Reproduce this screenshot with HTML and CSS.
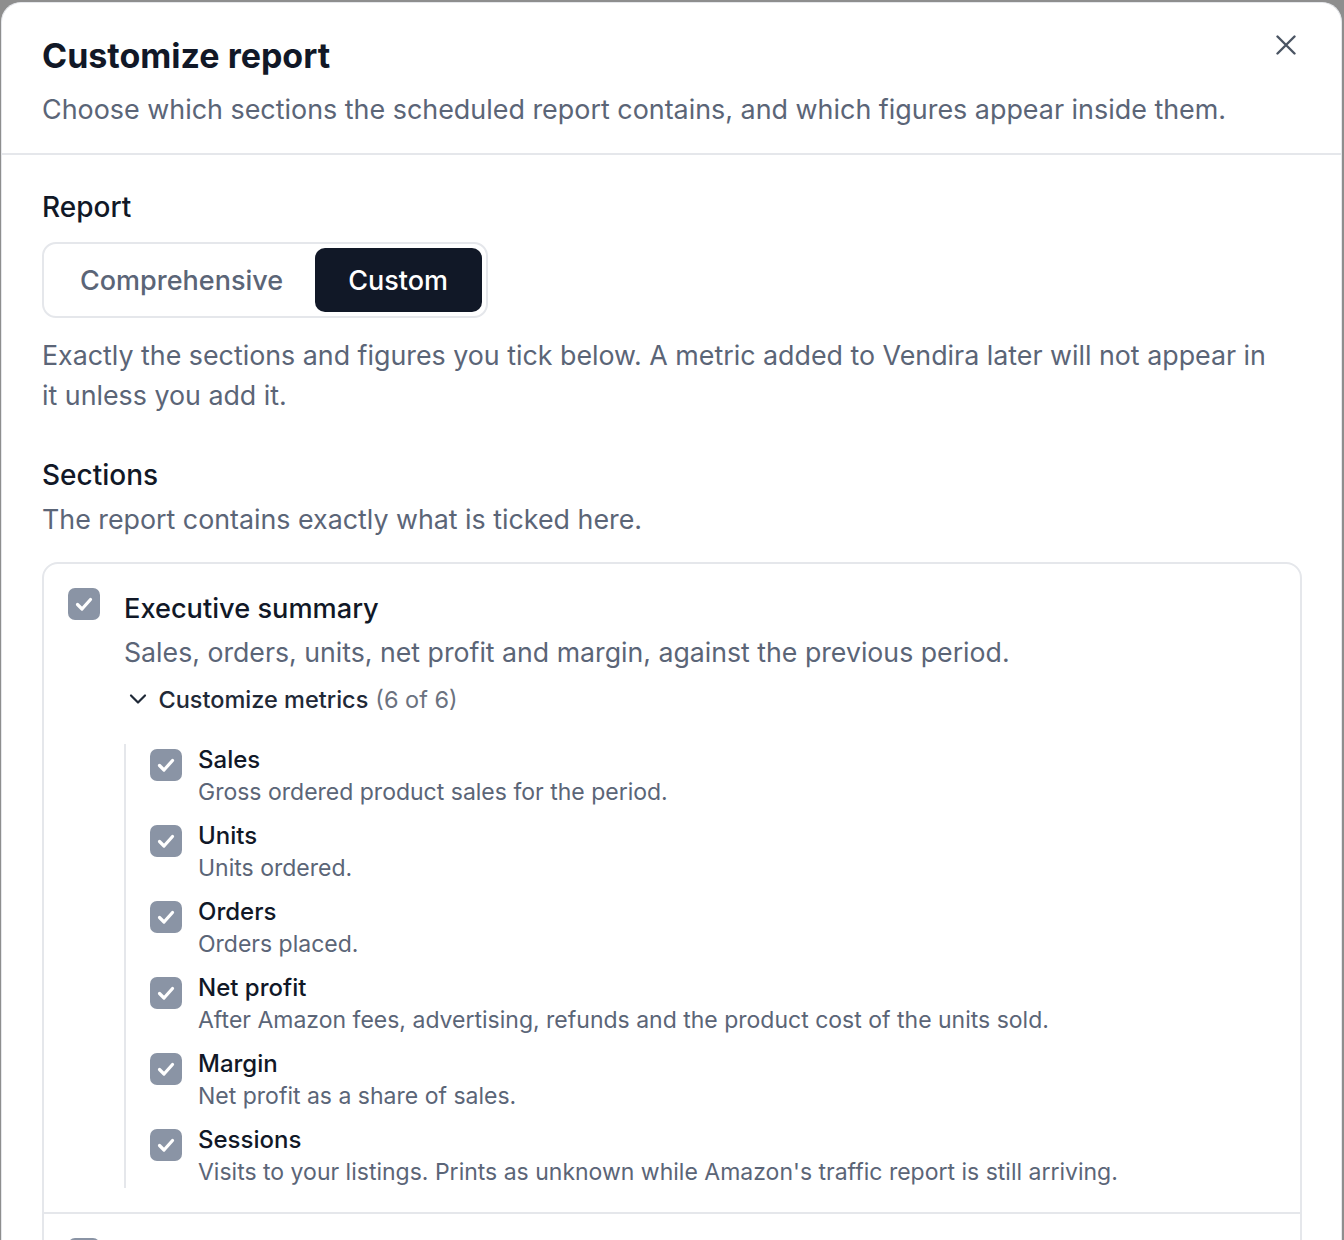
FILE: index.html
```html
<!DOCTYPE html>
<html lang="en">
<head>
<meta charset="utf-8">
<title>Customize report</title>
<link rel="stylesheet" href="styles.css">
</head>
<body>
<div class="dialog" role="dialog" aria-labelledby="dlg-title">
  <header class="dialog-head">
    <div class="head-text">
      <h1 id="dlg-title" class="title">Customize report</h1>
      <p class="subtitle">Choose which sections the scheduled report contains, and which figures appear inside them.</p>
    </div>
    <button class="close" aria-label="Close">
      <svg width="20" height="20" viewBox="0 0 20 20" fill="none" stroke="currentColor" stroke-width="2.4" stroke-linecap="round">
        <path d="M1.5 1.5 L18.5 18.5 M18.5 1.5 L1.5 18.5"/>
      </svg>
    </button>
  </header>

  <div class="dialog-body">
    <h2 class="label">Report</h2>
    <div class="segmented">
      <button class="seg">Comprehensive</button>
      <button class="seg seg-active">Custom</button>
    </div>
    <p class="help">Exactly the sections and figures you tick below. A metric added to Vendira later will not appear in it unless you add it.</p>

    <h2 class="label label-sections">Sections</h2>
    <p class="help help-tight">The report contains exactly what is ticked here.</p>

    <div class="sections">
      <div class="section">
        <span class="check">
          <svg viewBox="0 0 32 32" width="32" height="32"><path d="M9.5 16.5 L14 21 L22.5 11.5" fill="none" stroke="#fff" stroke-width="3.2" stroke-linecap="round" stroke-linejoin="round"/></svg>
        </span>
        <div class="section-main">
          <div class="section-title">Executive summary</div>
          <div class="section-desc">Sales, orders, units, net profit and margin, against the previous period.</div>
          <div class="toggle">
            <svg class="chev" width="18" height="18" viewBox="0 0 18 18" fill="none" stroke="currentColor" stroke-width="2.2" stroke-linecap="round" stroke-linejoin="round"><path d="M2 5.5 L9 12.5 L16 5.5"/></svg>
            <span class="toggle-text">Customize metrics</span>
            <span class="toggle-count">(6 of 6)</span>
          </div>
          <ul class="metrics">
            <li class="metric">
              <span class="check"><svg viewBox="0 0 32 32" width="32" height="32"><path d="M9.5 16.5 L14 21 L22.5 11.5" fill="none" stroke="#fff" stroke-width="3.2" stroke-linecap="round" stroke-linejoin="round"/></svg></span>
              <div><div class="metric-title">Sales</div><div class="metric-desc">Gross ordered product sales for the period.</div></div>
            </li>
            <li class="metric">
              <span class="check"><svg viewBox="0 0 32 32" width="32" height="32"><path d="M9.5 16.5 L14 21 L22.5 11.5" fill="none" stroke="#fff" stroke-width="3.2" stroke-linecap="round" stroke-linejoin="round"/></svg></span>
              <div><div class="metric-title">Units</div><div class="metric-desc">Units ordered.</div></div>
            </li>
            <li class="metric">
              <span class="check"><svg viewBox="0 0 32 32" width="32" height="32"><path d="M9.5 16.5 L14 21 L22.5 11.5" fill="none" stroke="#fff" stroke-width="3.2" stroke-linecap="round" stroke-linejoin="round"/></svg></span>
              <div><div class="metric-title">Orders</div><div class="metric-desc">Orders placed.</div></div>
            </li>
            <li class="metric">
              <span class="check"><svg viewBox="0 0 32 32" width="32" height="32"><path d="M9.5 16.5 L14 21 L22.5 11.5" fill="none" stroke="#fff" stroke-width="3.2" stroke-linecap="round" stroke-linejoin="round"/></svg></span>
              <div><div class="metric-title">Net profit</div><div class="metric-desc">After Amazon fees, advertising, refunds and the product cost of the units sold.</div></div>
            </li>
            <li class="metric">
              <span class="check"><svg viewBox="0 0 32 32" width="32" height="32"><path d="M9.5 16.5 L14 21 L22.5 11.5" fill="none" stroke="#fff" stroke-width="3.2" stroke-linecap="round" stroke-linejoin="round"/></svg></span>
              <div><div class="metric-title">Margin</div><div class="metric-desc">Net profit as a share of sales.</div></div>
            </li>
            <li class="metric">
              <span class="check"><svg viewBox="0 0 32 32" width="32" height="32"><path d="M9.5 16.5 L14 21 L22.5 11.5" fill="none" stroke="#fff" stroke-width="3.2" stroke-linecap="round" stroke-linejoin="round"/></svg></span>
              <div><div class="metric-title">Sessions</div><div class="metric-desc">Visits to your listings. Prints as unknown while Amazon's traffic report is still arriving.</div></div>
            </li>
          </ul>
        </div>
      </div>
      <div class="section">
        <span class="check">
          <svg viewBox="0 0 32 32" width="32" height="32"><path d="M9.5 16.5 L14 21 L22.5 11.5" fill="none" stroke="#fff" stroke-width="3.2" stroke-linecap="round" stroke-linejoin="round"/></svg>
        </span>
      </div>
    </div>
  </div>
</div>
</body>
</html>
```

FILE: styles.css
```css
* { box-sizing: border-box; }

html, body {
  margin: 0;
  height: 100%;
  overflow: hidden;
}

body {
  background: #8e8e8e;
  padding: 2px 2px 0 1px;
  font-family: Inter, "Noto Sans", "Liberation Sans", sans-serif;
  color: #111827;
}

.dialog {
  background: #fff;
  border: 1px solid #e5e7eb;
  border-bottom: 0;
  border-radius: 20px 20px 0 0;
  height: 1300px;
  overflow: hidden;
}

/* header */
.dialog-head {
  display: flex;
  justify-content: space-between;
  align-items: flex-start;
  padding: 33px 40px 24px 40px;
  border-bottom: 2px solid #e5e7eb;
}

.title {
  margin: 0;
  font-size: 34px;
  line-height: 40px;
  font-weight: 700;
  color: #111827;
}

.subtitle {
  margin: 13px 0 0;
  font-size: 26.9px;
  line-height: 40px;
  color: #5b6577;
}

.close {
  border: 0;
  background: none;
  padding: 0;
  margin: -1px 5px 0 0;
  color: #4b5563;
  display: flex;
}

/* body */
.dialog-body {
  padding: 34px 40px 0 40px;
}

.label {
  margin: 0;
  font-size: 28px;
  line-height: 36px;
  font-weight: 500;
  color: #111827;
}

.label-sections {
  margin-top: 42px;
}

.segmented {
  display: inline-flex;
  gap: 0;
  margin-top: 17px;
  padding: 4px;
  border: 2px solid #e5e7eb;
  border-radius: 14px;
}

.seg {
  border: 0;
  background: none;
  font-family: inherit;
  font-size: 27px;
  font-weight: 500;
  color: #5b6577;
  height: 64px;
  padding: 0 32px;
  border-radius: 10px;
}

.seg-active {
  background: #111827;
  color: #fff;
  padding: 0 34px 0 33px;
}

.help {
  margin: 17px 0 0;
  max-width: 1240px;
  font-size: 26.8px;
  line-height: 40px;
  color: #5b6577;
}

.help-tight {
  margin-top: 6px;
}

/* section list */
.sections {
  margin-top: 23px;
  border: 2px solid #e5e7eb;
  border-radius: 16px;
  width: 1260px;
}

.section {
  display: flex;
  gap: 24px;
  padding: 24px 24px;
}

.section + .section {
  border-top: 2px solid #e5e7eb;
}

.check {
  flex: none;
  width: 32px;
  height: 32px;
  border-radius: 7px;
  background: #8a94a5;
  display: flex;
}

.section-main {
  flex: 1;
}

.section-title {
  margin-top: 2px;
  font-size: 27.2px;
  line-height: 38px;
  font-weight: 500;
  color: #111827;
}

.section-desc {
  margin-top: 4px;
  font-size: 26.7px;
  line-height: 40px;
  color: #5b6577;
}

.toggle {
  display: flex;
  align-items: center;
  margin-top: 11px;
  height: 32px;
  font-size: 23.5px;
  color: #1f2937;
}

.chev {
  margin: 0 12px 0 4.5px;
  color: #1f2937;
}

.toggle-text {
  font-weight: 500;
}

.toggle-count {
  margin-left: 7px;
  color: #6b7280;
}

.metrics {
  list-style: none;
  margin: 29px 0 0;
  padding: 0 0 0 24px;
  border-left: 2px solid #e5e7eb;
  display: flex;
  flex-direction: column;
  gap: 12px;
}

.metric {
  display: flex;
  gap: 16px;
}

.metric .check {
  margin-top: 5px;
}

.metric-title {
  font-size: 24px;
  line-height: 32px;
  font-weight: 500;
  color: #111827;
}

.metric-desc {
  font-size: 23px;
  line-height: 32px;
  color: #5b6577;
}
```
